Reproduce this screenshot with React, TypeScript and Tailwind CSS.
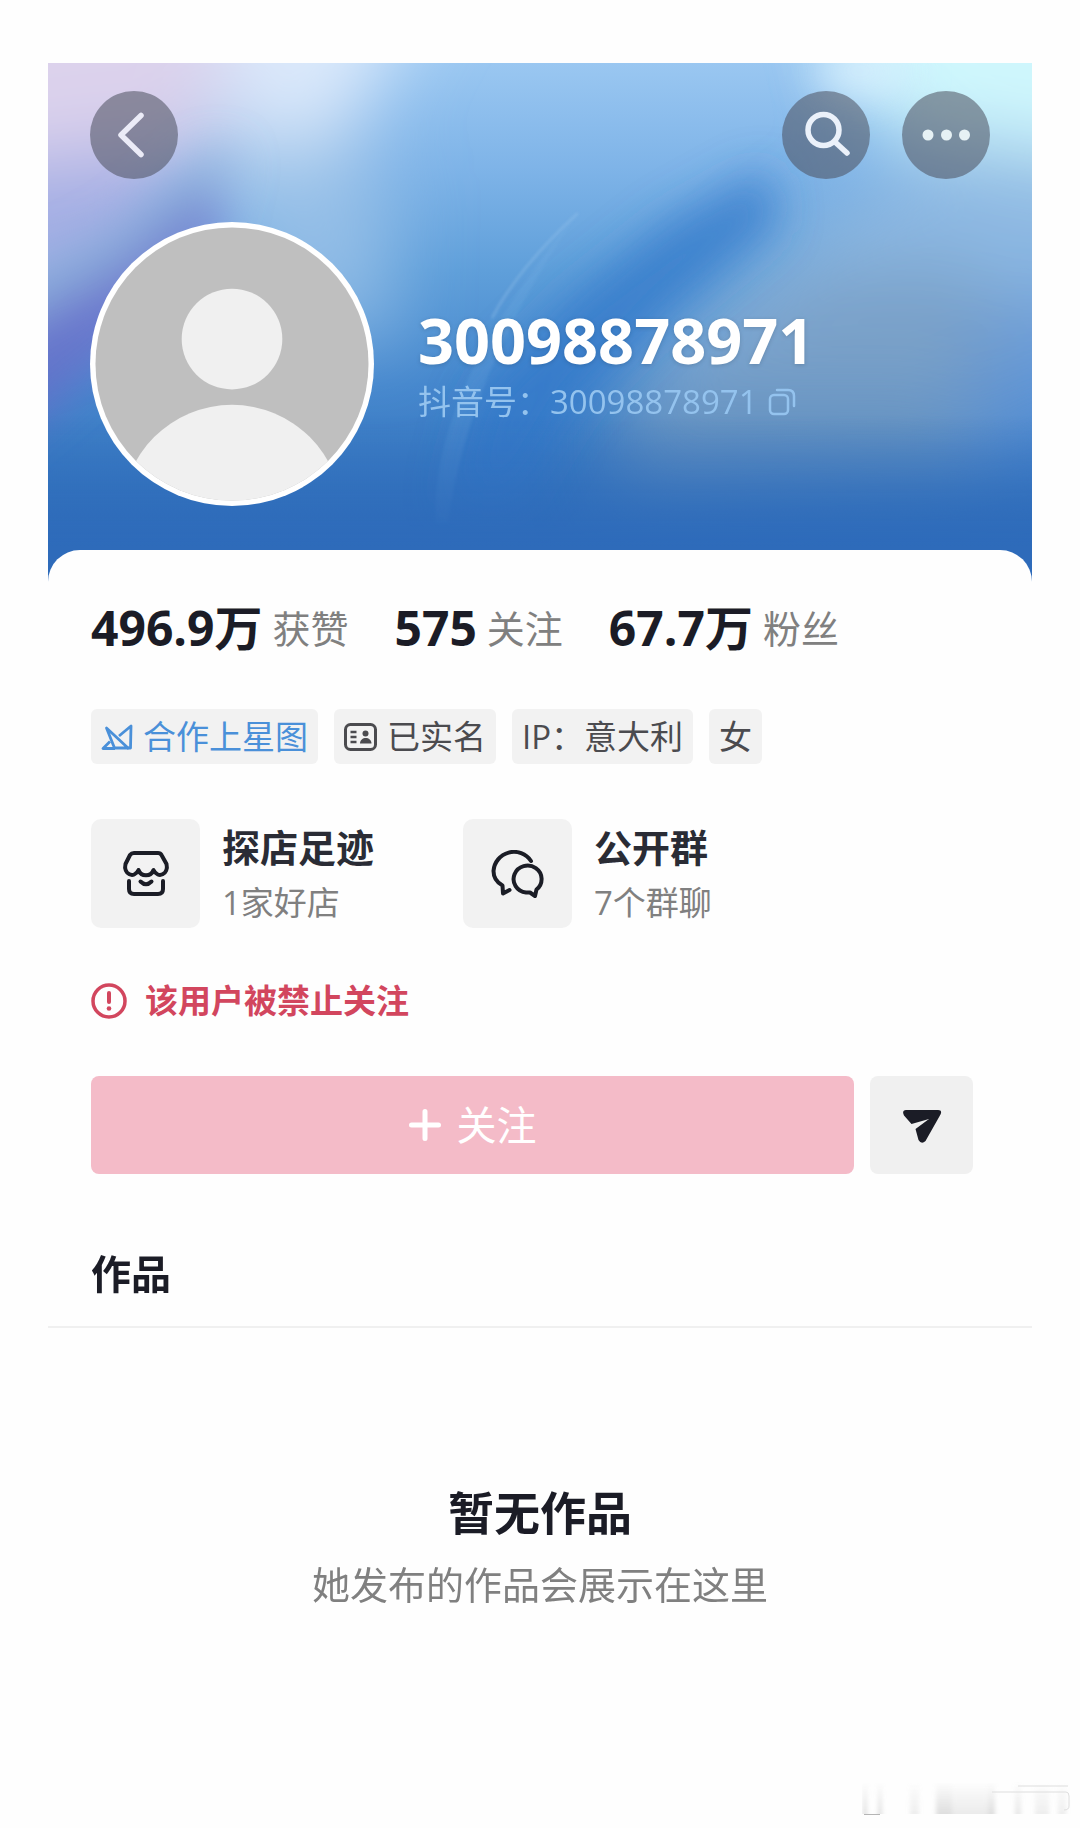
import type { ReactNode } from 'react';

interface Stat {
    value: string;
    label: string;
}

interface Feature {
    title: string;
    detail: string;
    icon: ReactNode;
}

const stats: Stat[] = [
    { value: '496.9万', label: '获赞' },
    { value: '575', label: '关注' },
    { value: '67.7万', label: '粉丝' },
];

const HeaderBackdrop = () => (
    <svg
        className="absolute inset-0 h-full w-full"
        viewBox="0 0 984 519"
        preserveAspectRatio="none"
        aria-hidden="true"
    >
        <defs>
            <linearGradient id="sky" x1="0" y1="0" x2="0" y2="1">
                <stop offset="0" stopColor="#9ac7f1" />
                <stop offset="0.2" stopColor="#7fb4e8" />
                <stop offset="0.4" stopColor="#5f9fda" />
                <stop offset="0.62" stopColor="#4587cd" />
                <stop offset="0.85" stopColor="#3474be" />
                <stop offset="1" stopColor="#2c69b8" />
            </linearGradient>
            <linearGradient id="floor" x1="0" y1="0" x2="0" y2="1">
                <stop offset="0.68" stopColor="#2e6bba" stopOpacity="0" />
                <stop offset="0.93" stopColor="#2e6bba" stopOpacity="1" />
            </linearGradient>
            <filter id="soft" x="-80%" y="-80%" width="260%" height="260%">
                <feGaussianBlur stdDeviation="38" />
            </filter>
            <filter id="mid" x="-80%" y="-80%" width="260%" height="260%">
                <feGaussianBlur stdDeviation="22" />
            </filter>
            <filter id="fine" x="-60%" y="-60%" width="220%" height="220%">
                <feGaussianBlur stdDeviation="1.5" />
            </filter>
        </defs>
        <rect width="984" height="519" fill="url(#sky)" />
        {/* left side: lavender into violet */}
        <g filter="url(#soft)">
            <path d="M-120 -120H210L160 90L60 230L-120 300Z" fill="#dcd2ec" />
            <path d="M-120 110L130 80L130 210L-120 300Z" fill="#a3aee4" />
            <path d="M170 -120H400L320 30L290 110L190 110Z" fill="#dbe9fb" />
            <path d="M130 90L300 60L345 120L340 290L220 240Z" fill="#9cc3e8" opacity="0.8" />
        </g>
        <g filter="url(#mid)">
            <path d="M-60 270L60 185L150 120L180 150L70 290L-60 400Z" fill="#6a6cc8" opacity="0.75" />
            <path d="M-60 230L70 165L170 85L190 105L80 200L-60 275Z" fill="#8aaedb" opacity="0.85" />
        </g>
        {/* right side: cyan glow over slate blue */}
        <g filter="url(#soft)">
            <path d="M780 -120H1100V130L900 90L820 50Z" fill="#cff7fd" />
            <path d="M740 170L900 70L1100 100V320L880 330L560 330Z" fill="#93bbe3" opacity="0.85" />
            <path d="M580 330L760 210L900 200L1000 260L940 420L560 440Z" fill="#7399bd" opacity="0.7" />
            <path d="M940 250L1100 200V420L900 400Z" fill="#5b92d8" opacity="0.6" />
        </g>
        <g filter="url(#mid)">
            <path d="M620 160L720 105L730 160L620 250L530 340L470 440L400 440L430 330L520 240Z" fill="#3378ca" opacity="0.75" />
        </g>
        <ellipse cx="812" cy="8" rx="50" ry="26" fill="#e0f4ff" opacity="0.8" filter="url(#mid)" />
        <path d="M388 460Q380 330 530 150Q420 310 400 460Z" fill="#8fc1ee" opacity="0.12" filter="url(#fine)" />
        <path d="M444 255Q470 205 530 150" fill="none" stroke="#9dc8ee" strokeWidth="2" opacity="0.45" filter="url(#fine)" />
        <rect width="984" height="519" fill="url(#floor)" />
    </svg>
);

const Avatar = () => (
    <svg className="size-[284px] shrink-0" viewBox="0 0 285 285" role="img" aria-label="头像">
        <defs>
            <clipPath id="face">
                <circle cx="142.5" cy="142.5" r="137" />
            </clipPath>
        </defs>
        <circle cx="142.5" cy="142.5" r="142.5" fill="#ffffff" />
        <g clipPath="url(#face)">
            <rect width="285" height="285" fill="#bfbfbf" />
            <circle cx="142.5" cy="117.5" r="50.5" fill="#f0f0f0" />
            <circle cx="142.5" cy="294" r="110.5" fill="#f0f0f0" />
        </g>
    </svg>
);

const StoreIcon = () => (
    <svg className="size-12" viewBox="0 0 48 48" fill="none" stroke="#1b1d26" strokeWidth="4" strokeLinecap="round" strokeLinejoin="round">
        <path d="M12 3H36Q38.500 3 39.500 5L44.500 14C47 24 36 29.500 31.500 20C29 27 19 27 16.500 20C12 29.500 1 24 3.500 14L8 5Q9.500 3 12 3Z" />
        <path d="M7 31V39Q7 44 12 44H36Q41 44 41 39V31" />
        <path d="M18.500 31.500Q24 37 29.500 31.500" />
    </svg>
);

const ChatIcon = () => (
    <svg className="h-12 w-[54px]" viewBox="0 0 54 48" fill="none" stroke="#1b1d26" strokeWidth="4" strokeLinecap="round" strokeLinejoin="round">
        <path d="M40 11A20.500 20.500 0 0 0 2.500 21C2.500 27.500 6 32.500 11.500 35.500L12 43.500L18.500 40" />
        <path d="M45.500 39.500A14 13.500 0 1 0 35 42.500L39 42.500L44 46Z" />
    </svg>
);

const features: Feature[] = [
    { title: '探店足迹', detail: '1家好店', icon: <StoreIcon /> },
    { title: '公开群', detail: '7个群聊', icon: <ChatIcon /> },
];

const StarMapIcon = () => (
    <svg className="h-7 w-8" viewBox="0 0 32 28" fill="none" stroke="#4a90d9" strokeWidth="2.800" strokeLinejoin="round">
        <path d="M5.500 5L27 25H13.500Z" />
        <path d="M18 13L30 3L29.500 25H26" />
        <path d="M9 18.500L2 25.500H14" />
    </svg>
);

const IdCardIcon = () => (
    <svg className="h-7 w-[33px]" viewBox="0 0 33 28" fill="none">
        <rect x="1.500" y="1.500" width="30" height="25" rx="5" stroke="#4b4b4f" strokeWidth="3" />
        <path d="M6.500 9H12.500M6.500 14H12.500M6.500 19H12.500" stroke="#4b4b4f" strokeWidth="2.500" />
        <circle cx="21.500" cy="10.500" r="3" fill="#4b4b4f" />
        <path d="M16 20.500C16 13 27.500 13 27.500 20.500Z" fill="#4b4b4f" />
    </svg>
);

const Tag = ({ icon, children, className = 'text-[#4b4b4f]' }: { icon?: ReactNode; children: ReactNode; className?: string }) => (
    <li className={`flex h-[55px] items-center gap-[10px] rounded-md bg-[#f2f2f2] px-[10px] text-[33px] leading-none ${className}`}>
        {icon}
        <span>{children}</span>
    </li>
);

const roundButton = 'flex size-[88px] items-center justify-center rounded-full bg-[#4a4e5c]/55';

export default function App() {
    return (
        <div className="flex min-h-screen flex-col bg-[#fefefe] px-12 pt-[63px] font-['Open_Sans','Noto_Sans_CJK_SC',sans-serif] text-[#1b1c26]">
            <header className="relative px-[42px] pt-7 pb-[76px]">
                <HeaderBackdrop />
                <div className="relative flex items-center gap-8">
                    <button aria-label="返回" className={roundButton}>
                        <svg className="size-12" viewBox="0 0 48 48" fill="none" stroke="#ebebf7" strokeWidth="5.500" strokeLinecap="round" strokeLinejoin="round">
                            <path d="M31 4.500L11 24L31 43.500" />
                        </svg>
                    </button>
                    <button aria-label="搜索" className={`ml-auto ${roundButton}`}>
                        <svg className="size-12" viewBox="0 0 48 48" fill="none" stroke="#ebf1fa" strokeWidth="5.500" strokeLinecap="round">
                            <circle cx="21.500" cy="19" r="15.500" />
                            <path d="M33 31L45 42" />
                        </svg>
                    </button>
                    <button aria-label="更多" className={roundButton}>
                        <svg className="size-12" viewBox="0 0 48 48" fill="#e6f1f4">
                            <circle cx="6" cy="24" r="5.500" />
                            <circle cx="24.500" cy="24" r="5.500" />
                            <circle cx="42.500" cy="24" r="5.500" />
                        </svg>
                    </button>
                </div>
                <div className="relative mt-[43px] flex items-center gap-11">
                    <Avatar />
                    <div className="pt-1">
                        <h1 className="text-[63px] leading-[72px] font-bold text-white drop-shadow-sm">30098878971</h1>
                        <p className="flex items-center gap-[10px] text-[33px] leading-[52px] text-[#94c3ee]">
                            <span>抖音号：30098878971</span>
                            <button aria-label="复制抖音号">
                                <svg className="size-7" viewBox="0 0 28 28" fill="none" stroke="currentColor" strokeWidth="2.500" strokeLinecap="round">
                                    <rect x="2" y="7" width="18" height="19" rx="4" />
                                    <path d="M9 2H20Q26 2 26 8V18" />
                                </svg>
                            </button>
                        </p>
                    </div>
                </div>
            </header>

            <main className="relative -mt-8 rounded-t-[32px] bg-[#fefefe] pt-[50px]">
                <div className="px-[43px]">
                    <ul className="flex gap-[46px]">
                        {stats.map((stat) => (
                            <li key={stat.label} className="flex items-center gap-[10px] leading-[56px]">
                                <span className="text-[48px] font-bold">{stat.value}</span>
                                <span className="text-[38px] text-[#808080]">{stat.label}</span>
                            </li>
                        ))}
                    </ul>

                    <ul className="mt-[53px] flex gap-4">
                        <Tag icon={<StarMapIcon />} className="text-[#4a90d9]">合作上星图</Tag>
                        <Tag icon={<IdCardIcon />}>已实名</Tag>
                        <Tag>IP：意大利</Tag>
                        <Tag>女</Tag>
                    </ul>

                    <div className="mt-[55px] grid grid-cols-[372px_1fr]">
                        {features.map((feature) => (
                            <a key={feature.title} href="#" className="flex items-center gap-[22px]">
                                <span className="flex size-[109px] items-center justify-center rounded-[10px] bg-[#f2f2f2]">
                                    {feature.icon}
                                </span>
                                <span className="flex flex-col gap-[10px]">
                                    <span className="text-[38px] leading-[48px] font-bold text-[#2a2c35]">{feature.title}</span>
                                    <span className="text-[33px] leading-[44px] text-[#808080]">{feature.detail}</span>
                                </span>
                            </a>
                        ))}
                    </div>

                    <p className="mt-[55px] flex items-center gap-[18px] text-[33px] leading-9 font-bold text-[#d2465e]">
                        <svg className="size-9" viewBox="0 0 36 36" fill="none" stroke="currentColor" strokeLinecap="round">
                            <circle cx="18" cy="18" r="16" strokeWidth="3.500" />
                            <path d="M18 10V19" strokeWidth="4" />
                            <circle cx="18" cy="25.500" r="2.300" fill="currentColor" stroke="none" />
                        </svg>
                        该用户被禁止关注
                    </p>

                    <div className="mt-[57px] mr-4 flex gap-4">
                        <button className="flex h-[98px] flex-1 items-center justify-center gap-4 rounded-lg bg-[#f4bbc8] text-[40px] text-white">
                            <svg className="size-8" viewBox="0 0 32 32" stroke="currentColor" strokeWidth="5" strokeLinecap="round">
                                <path d="M16 2.500V29.500M2.500 16H29.500" />
                            </svg>
                            关注
                        </button>
                        <button aria-label="私信" className="flex h-[98px] w-[103px] items-center justify-center rounded-lg bg-[#f0f0f0]">
                            <svg className="h-9 w-10" viewBox="0 0 40 36" fill="#1b1c26">
                                <path d="M4 3H36Q40.500 3 38.500 7.500L23.500 34Q19.500 38 16.500 33L13.500 22L27 12L9.500 17L2 8.500Q-0.500 3.500 4 3Z" />
                            </svg>
                        </button>
                    </div>

                    <h2 className="mt-[76px] mb-7 text-[40px] leading-[48px] font-bold">作品</h2>
                </div>

                <section className="border-t-2 border-[#f0f0f0] pt-[156px] text-center">
                    <h3 className="text-[46px] leading-[56px] font-bold">暂无作品</h3>
                    <p className="mt-5 text-[38px] leading-[48px] text-[#808080]">她发布的作品会展示在这里</p>
                </section>
            </main>

            <footer className="-mr-10 mt-auto flex justify-end pb-3">
                {/* faded corner mark */}
                <svg className="h-9 w-[210px]" viewBox="0 0 210 36" aria-hidden="true">
                    <defs>
                        <linearGradient id="fade" x1="0" y1="0" x2="0" y2="1">
                            <stop offset="0" stopColor="#c4c4c4" stopOpacity="0" />
                            <stop offset="1" stopColor="#c4c4c4" stopOpacity="0.550" />
                        </linearGradient>
                        <filter id="smear" x="-10%" y="-10%" width="120%" height="120%">
                            <feGaussianBlur stdDeviation="2 0.500" />
                        </filter>
                    </defs>
                    <g fill="url(#fade)" filter="url(#smear)">
                        <rect x="1" y="2" width="4" height="32" />
                        <rect x="16" y="2" width="4" height="32" />
                        <rect x="48" y="2" width="9" height="32" opacity="0.500" />
                        <rect x="74" y="2" width="16" height="32" />
                        <rect x="90" y="2" width="36" height="32" opacity="0.600" />
                        <rect x="126" y="2" width="7" height="32" />
                        <rect x="153" y="2" width="6" height="32" opacity="0.700" />
                        <rect x="173" y="2" width="14" height="32" opacity="0.500" />
                        <rect x="196" y="2" width="8" height="32" opacity="0.500" />
                    </g>
                    <path d="M2 34.500H18" stroke="#b5b5b5" strokeWidth="1" />
                    <path d="M156 6H206M130 12H204Q207 12 207 16V26Q207 30 202 30" fill="none" stroke="#dedede" strokeWidth="1" />
                </svg>
            </footer>
        </div>
    );
}
